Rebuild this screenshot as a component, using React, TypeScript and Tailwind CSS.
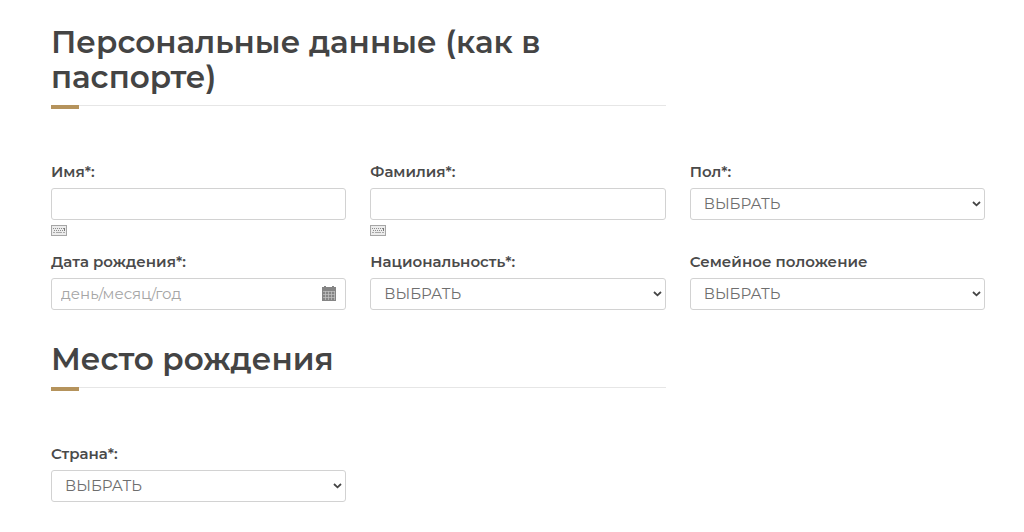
import { useId } from "react";
import type { ReactNode } from "react";

const controlClass =
  "h-8 w-full rounded-[3px] border border-[#d2d2d2] bg-white text-[15px] text-[#6e6e6e] outline-none focus:border-[#b5935c]";

function SectionTitle({ children }: { children: ReactNode }) {
  return (
    <div className="grid grid-cols-3 gap-x-6">
      <div className="col-span-2 border-b border-[#e6e6e6]">
        <h2 className="pb-2.5 text-[31px] leading-[35px] font-semibold text-[#444444]">{children}</h2>
        <div className="-mb-1 h-1 w-7 bg-[#b5935c]" />
      </div>
    </div>
  );
}

function KeyboardIcon() {
  return (
    <svg width="16" height="11" viewBox="0 0 16 11" aria-hidden="true">
      <rect x="0.5" y="0.5" width="15" height="10" fill="#ececec" stroke="#a6a6a6" />
      <path d="M2 3.5h12M3 5.5h11" stroke="#8c8c8c" strokeDasharray="1 1" />
      <path d="M2 7.5h2M5 7.5h6M12 7.5h2" stroke="#a8a8a8" />
      <path d="M13.5 3v3" stroke="#777777" />
    </svg>
  );
}

function CalendarIcon() {
  return (
    <svg width="14" height="15" viewBox="0 0 14 15" aria-hidden="true">
      <path d="M0 1h2V0h2v1h6V0h2v1h2v14H0z" fill="#858585" />
      <path d="M1 5.5h12M1 8.5h12M1 11.5h12M3.5 5v9M6.5 5v9M9.5 5v9M12.5 5v9" stroke="#c4c4c4" strokeWidth="0.7" />
    </svg>
  );
}

function Label({ id, children }: { id: string; children: ReactNode }) {
  return (
    <label htmlFor={id} className="mb-1 block text-[15px] leading-6 font-semibold text-[#4a4a4a]">
      {children}
    </label>
  );
}

function NameField({ label }: { label: string }) {
  const id = useId();
  return (
    <div>
      <Label id={id}>{label}</Label>
      <input id={id} type="text" className={`${controlClass} px-2.5`} />
      <button type="button" aria-label="Экранная клавиатура" className="mt-[5px] block">
        <KeyboardIcon />
      </button>
    </div>
  );
}

function DateField({ label }: { label: string }) {
  const id = useId();
  return (
    <div>
      <Label id={id}>{label}</Label>
      <div className="relative">
        <input
          id={id}
          type="text"
          placeholder="день/месяц/год"
          className={`${controlClass} pr-9 pb-0.5 pl-[9px] placeholder:text-[#a5a5a5]`}
        />
        <button type="button" aria-label="Открыть календарь" className="absolute top-0 right-2.5 flex h-[30px] items-center">
          <CalendarIcon />
        </button>
      </div>
    </div>
  );
}

function SelectField({ label }: { label: string }) {
  const id = useId();
  return (
    <div>
      <Label id={id}>{label}</Label>
      <div className="relative">
        <select id={id} className={`${controlClass} appearance-none pr-6 pl-[13px]`}>
          <option>ВЫБРАТЬ</option>
        </select>
        <svg
          className="pointer-events-none absolute inset-y-0 right-1 my-auto"
          width="9"
          height="6"
          viewBox="0 0 9 6"
          fill="none"
          aria-hidden="true"
        >
          <path d="M1 1l3.5 3.3L8 1" stroke="#454545" strokeWidth="1.8" />
        </svg>
      </div>
    </div>
  );
}

export default function App() {
  return (
    <main className="min-h-screen bg-white pt-[25px] pr-[39px] pb-7 pl-[51px] font-['Montserrat','Inter',sans-serif]">
      <form>
        <section>
          <SectionTitle>Персональные данные (как в паспорте)</SectionTitle>
          <div className="mt-[54px] grid grid-cols-3 gap-x-6 gap-y-[14px]">
            <NameField label="Имя*:" />
            <NameField label="Фамилия*:" />
            <SelectField label="Пол*:" />
            <DateField label="Дата рождения*:" />
            <SelectField label="Национальность*:" />
            <SelectField label="Семейное положение" />
          </div>
        </section>
        <section className="mt-8">
          <SectionTitle>Место рождения</SectionTitle>
          <div className="mt-[54px] grid grid-cols-3 gap-x-6">
            <SelectField label="Страна*:" />
          </div>
        </section>
      </form>
    </main>
  );
}
